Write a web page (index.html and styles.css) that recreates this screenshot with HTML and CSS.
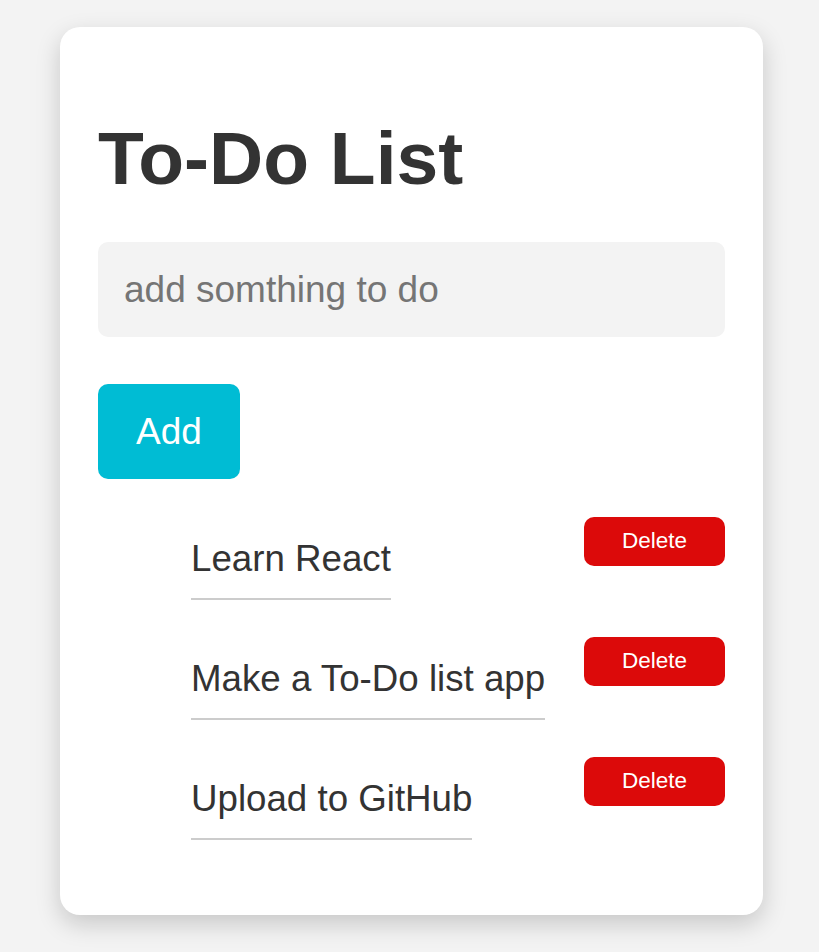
FILE: index.html
```html
<!DOCTYPE html>
<html lang="en">
<head>
<meta charset="utf-8">
<title>To-Do List</title>
<link rel="stylesheet" href="styles.css">
</head>
<body>
<div class="card">
  <h1 class="title">To-Do List</h1>
  <input class="todo-input" type="text" placeholder="add somthing to do">
  <button class="add-btn">Add</button>
  <ul class="todo-list">
    <li class="todo-item"><span class="todo-text">Learn React</span><button class="delete-btn">Delete</button></li>
    <li class="todo-item"><span class="todo-text">Make a To-Do list app</span><button class="delete-btn">Delete</button></li>
    <li class="todo-item"><span class="todo-text">Upload to GitHub</span><button class="delete-btn">Delete</button></li>
  </ul>
</div>
</body>
</html>
```

FILE: styles.css
```css
* { box-sizing: border-box; }

html, body {
  margin: 0;
  background: #f3f3f3;
  font-family: "Liberation Sans", Arial, sans-serif;
}

body {
  padding: 27px 0 37px 60px;
}

.card {
  width: 703px;
  height: 888px;
  background: #ffffff;
  border-radius: 20px;
  box-shadow: 0 9px 24px rgba(0, 0, 0, 0.18);
  padding: 38px;
  display: flex;
  flex-direction: column;
  align-items: flex-start;
}

.title {
  margin: 50px 0 41px;
  font-size: 75px;
  font-weight: 700;
  line-height: 86px;
  color: #333333;
}

.todo-input {
  width: 100%;
  height: 95px;
  border: none;
  outline: none;
  border-radius: 10px;
  background: #f3f3f3;
  padding: 0 26px;
  font-family: "Liberation Sans", Arial, sans-serif;
  font-size: 37px;
  color: #333333;
}

.todo-input::placeholder {
  color: #757575;
}

.add-btn {
  margin-top: 47px;
  width: 142px;
  height: 95px;
  border: none;
  border-radius: 10px;
  background: #00bcd4;
  color: #ffffff;
  font-family: "Liberation Sans", Arial, sans-serif;
  font-size: 37px;
  padding: 0;
}

.todo-list {
  list-style: none;
  margin: 38px 0 0;
  padding: 0 0 0 93px;
  width: 100%;
  display: flex;
  flex-direction: column;
  gap: 37px;
}

.todo-item {
  display: flex;
  justify-content: space-between;
  align-items: flex-start;
}

.todo-text {
  font-size: 36.7px;
  line-height: 42px;
  color: #333333;
  padding: 21px 0 18px;
  border-bottom: 2px solid #cccccc;
}

.delete-btn {
  width: 141px;
  height: 49px;
  border: none;
  border-radius: 10px;
  background: #dc0a0a;
  color: #ffffff;
  font-family: "Liberation Sans", Arial, sans-serif;
  font-size: 22.5px;
  padding: 0 0 2px;
}
```
